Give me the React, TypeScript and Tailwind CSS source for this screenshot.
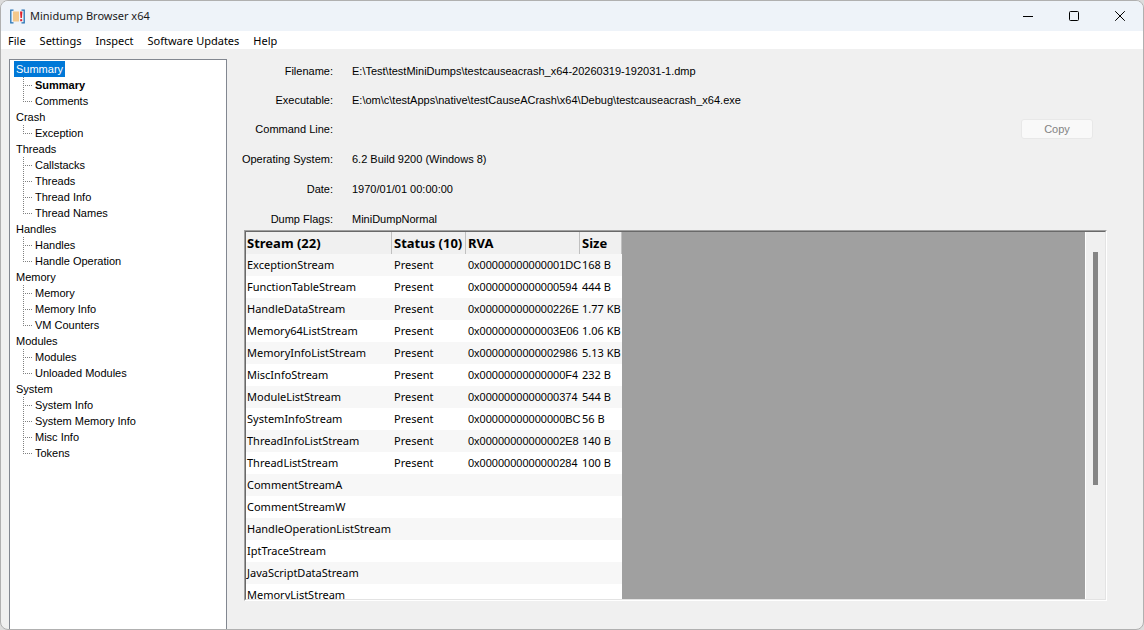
type Group = { title: string; items: string[] };

const groups: Group[] = [
  { title: "Summary", items: ["Summary", "Comments"] },
  { title: "Crash", items: ["Exception"] },
  { title: "Threads", items: ["Callstacks", "Threads", "Thread Info", "Thread Names"] },
  { title: "Handles", items: ["Handles", "Handle Operation"] },
  { title: "Memory", items: ["Memory", "Memory Info", "VM Counters"] },
  { title: "Modules", items: ["Modules", "Unloaded Modules"] },
  { title: "System", items: ["System Info", "System Memory Info", "Misc Info", "Tokens"] },
];

const streams: [string, string, string, string][] = [
  ["ExceptionStream", "Present", "0x00000000000001DC", "168 B"],
  ["FunctionTableStream", "Present", "0x0000000000000594", "444 B"],
  ["HandleDataStream", "Present", "0x000000000000226E", "1.77 KB"],
  ["Memory64ListStream", "Present", "0x0000000000003E06", "1.06 KB"],
  ["MemoryInfoListStream", "Present", "0x0000000000002986", "5.13 KB"],
  ["MiscInfoStream", "Present", "0x00000000000000F4", "232 B"],
  ["ModuleListStream", "Present", "0x0000000000000374", "544 B"],
  ["SystemInfoStream", "Present", "0x00000000000000BC", "56 B"],
  ["ThreadInfoListStream", "Present", "0x00000000000002E8", "140 B"],
  ["ThreadListStream", "Present", "0x0000000000000284", "100 B"],
  ["CommentStreamA", "", "", ""],
  ["CommentStreamW", "", "", ""],
  ["HandleOperationListStream", "", "", ""],
  ["IptTraceStream", "", "", ""],
  ["JavaScriptDataStream", "", "", ""],
  ["MemoryListStream", "", "", ""],
];

const details: [string, string][] = [
  ["Filename:", "E:\\Test\\testMiniDumps\\testcauseacrash_x64-20260319-192031-1.dmp"],
  ["Executable:", "E:\\om\\c\\testApps\\native\\testCauseACrash\\x64\\Debug\\testcauseacrash_x64.exe"],
  ["Command Line:", ""],
  ["Operating System:", "6.2 Build 9200 (Windows 8)"],
  ["Date:", "1970/01/01 00:00:00"],
  ["Dump Flags:", "MiniDumpNormal"],
];

function TitleBar() {
  return (
    <header className="flex h-[30px] shrink-0 items-center bg-[#eef3f9] pl-[9px]">
      <svg width="15" height="15" viewBox="0 0 15 15" className="shrink-0" aria-hidden="true">
        <path d="M3.5 1.2H.8v12.6h2.7M11.5 1.2h2.7v12.6h-2.7" fill="none" stroke="#2472b4" strokeWidth="1.3" />
        <rect x="3" y="2.5" width="6" height="10" fill="#f3c88c" />
        <path d="M10 2.5h2.4l-.5 6.5h-1.4z" fill="#e0202a" />
        <rect x="10.2" y="10.2" width="2" height="2" fill="#e0202a" />
      </svg>
      <h1 className="ml-[5px] grow text-[11px] leading-4 text-[#1a1a1a]">Minidump Browser x64</h1>
      <button aria-label="Minimize" className="flex h-full w-[46px] items-center justify-center">
        <svg width="10" height="10" viewBox="0 0 10 10"><path d="M0 5.5h10" stroke="#000" /></svg>
      </button>
      <button aria-label="Maximize" className="flex h-full w-[46px] items-center justify-center">
        <svg width="10" height="10" viewBox="0 0 10 10"><rect x=".5" y=".5" width="9" height="9" rx="1" fill="none" stroke="#000" /></svg>
      </button>
      <button aria-label="Close" className="flex h-full w-[46px] items-center justify-center">
        <svg width="10" height="10" viewBox="0 0 10 10"><path d="M.2.2l9.6 9.6M9.8.2L.2 9.8" stroke="#000" /></svg>
      </button>
    </header>
  );
}

function Branch({ last }: { last: boolean }) {
  return (
    <svg width="9" height="16" viewBox="0 0 9 16" className="shrink-0" aria-hidden="true">
      <path d={last ? "M.5 0V8" : "M.5 0V16"} stroke="#808080" strokeDasharray="1 1" />
      <path d="M0 8.5H9" stroke="#808080" strokeDasharray="1 1" />
    </svg>
  );
}

function Tree() {
  return (
    <nav className="w-[218px] shrink-0 border border-b-0 border-[#828790] bg-white pt-px pl-1 text-[11px] leading-4">
      {groups.map((g, gi) => (
        <section key={g.title}>
          <h2 className={gi === 0 ? "w-fit bg-[#0078d7] px-[2px] text-white" : "px-[2px]"}>{g.title}</h2>
          <ul className="pl-[9px]">
            {g.items.map((item, i) => (
              <li key={item} className="flex">
                <Branch last={i === g.items.length - 1} />
                <a href="#" className={gi === 0 && i === 0 ? "ml-[3px] font-bold" : "ml-[3px]"}>{item}</a>
              </li>
            ))}
          </ul>
        </section>
      ))}
    </nav>
  );
}

function Details() {
  return (
    <div className="grid grid-cols-[89px_auto_1fr] grid-rows-[29px_29px_30px_30px_30px_20px] items-start gap-x-[19px] text-[11px] leading-5 whitespace-nowrap">
      {details.map(([label, value], i) => (
        <div key={label} className="contents">
          <span className="col-start-1 justify-self-end">{label}</span>
          <span className={i === 2 ? "col-start-2" : "col-start-2 col-span-2"}>{value}</span>
          {i === 2 && (
            <button disabled className="mr-[14px] h-5 w-[72px] justify-self-end rounded-[3px] border border-[#e8e8e8] bg-[#f9f9f9] leading-4 text-[#838383]">
              Copy
            </button>
          )}
        </div>
      ))}
    </div>
  );
}

function StreamTable() {
  const head = "border-r border-[#c0c0c0] p-0 text-left text-[13px] font-bold";
  return (
    <div className="mt-px mb-[28px] flex min-h-0 grow flex-col border-t border-r border-b border-l border-t-[#a0a0a0] border-r-white border-b-white border-l-[#a0a0a0]">
      <div className="flex min-h-0 grow overflow-hidden border border-t-[#696969] border-r-[#e3e3e3] border-b-[#e3e3e3] border-l-[#696969]">
        <div className="min-w-0 grow overflow-hidden bg-[#a0a0a0]">
          <table className="w-[376px] table-fixed border-separate border-spacing-0 font-['Noto_Sans','Open_Sans',sans-serif] text-[11px] whitespace-nowrap">
            <colgroup>
              <col className="w-[146px]" />
              <col className="w-[74px]" />
              <col className="w-[114px]" />
              <col className="w-[42px]" />
            </colgroup>
            <thead className="bg-[#f0f0f0]">
              <tr className="h-[22px] leading-5">
                <th className={head + " pl-px"}>Stream (22)</th>
                <th className={head + " pl-[2px]"}>Status (10)</th>
                <th className={head + " pl-[2px]"}>RVA</th>
                <th className={head + " pl-[2px]"}>Size</th>
              </tr>
            </thead>
            <tbody>
              {streams.map(([name, status, rva, size]) => (
                <tr key={name} className="h-[22px] leading-5 odd:bg-[#f7f7f7] even:bg-white">
                  <td className="p-0 pl-px">{name}</td>
                  <td className="p-0 pl-[2px]">{status}</td>
                  <td className="p-0 pl-[2px] font-['Liberation_Sans',Arial,sans-serif]">{rva}</td>
                  <td className="p-0 pl-[2px]">{size}</td>
                </tr>
              ))}
            </tbody>
          </table>
        </div>
        <div className="w-5 shrink-0 border-l border-white bg-[#f0f0f0] pt-5 pl-[7px]">
          <div className="h-[233px] w-[5px] bg-[#858585]" />
        </div>
      </div>
    </div>
  );
}

export default function App() {
  return (
    <div className="h-screen w-full bg-[#dcdcdc] font-['Liberation_Sans',Arial,sans-serif] text-black">
      <div className="flex h-full flex-col overflow-hidden rounded-lg border border-[#b0b0b0] bg-[#f0f0f0]">
        <div className="shrink-0 font-['Noto_Sans','Open_Sans',sans-serif]">
          <TitleBar />
          <nav className="flex h-[18px] gap-[14px] bg-white pl-[7px] text-[11px] leading-5">
            {["File", "Settings", "Inspect", "Software Updates", "Help"].map((m) => (
              <button key={m}>{m}</button>
            ))}
          </nav>
        </div>
        <div className="flex min-h-0 grow pt-[10px] pl-2">
          <Tree />
          <main className="mr-[36px] ml-[17px] flex min-w-0 grow flex-col pt-[2px]">
            <Details />
            <StreamTable />
          </main>
        </div>
      </div>
    </div>
  );
}
